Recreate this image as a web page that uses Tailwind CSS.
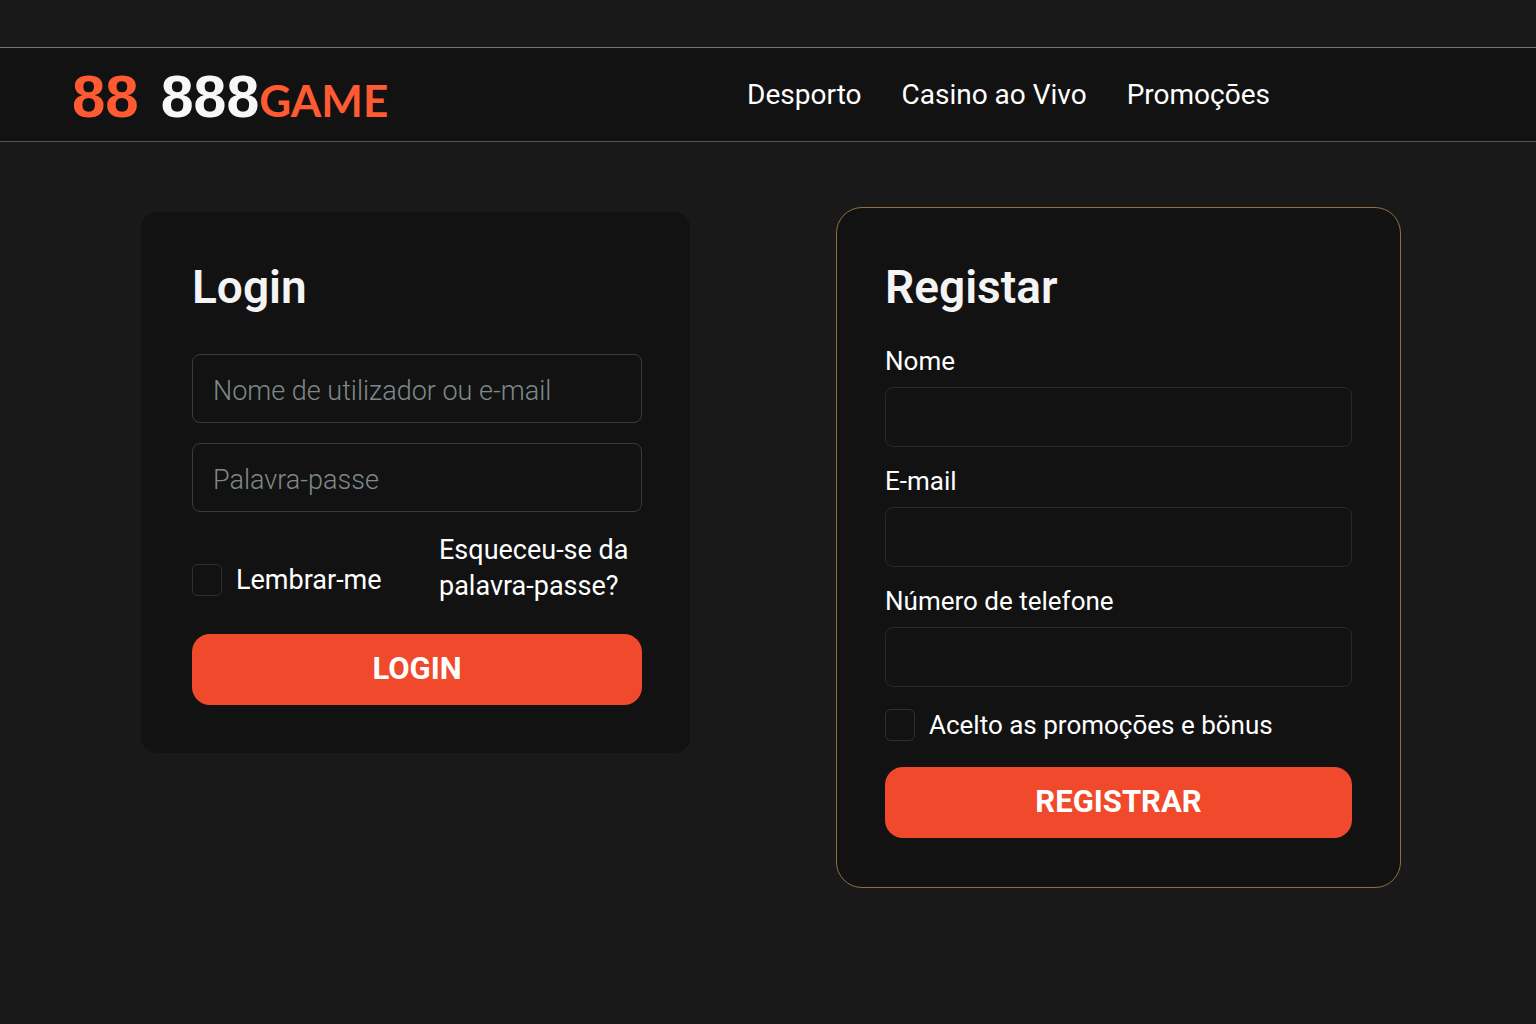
<!DOCTYPE html>
<html lang="pt">
<head>
<meta charset="utf-8">
<meta name="viewport" content="width=device-width, initial-scale=1">
<title>888GAME</title>
<script src="https://cdn.jsdelivr.net/npm/@tailwindcss/browser@4"></script>
</head>
<body class="min-h-screen bg-[#191919] pt-[47px] font-[Roboto,sans-serif] text-white">
<header class="flex items-center justify-between border-y border-t-[#777] border-b-[#555] bg-[#121212] pr-[266px] pl-[72px]">
  <a href="#" class="flex items-baseline gap-[22px] pt-[19px] pb-[14px] font-['Liberation_Sans',sans-serif] font-bold leading-none">
    <span class="text-[60px] leading-none text-[#ff5a32]">88</span>
    <span class="flex items-baseline"><span class="text-[59px] leading-none text-[#f7f7f7]">888</span><span class="font-[Lato,sans-serif] text-[44px] leading-none text-[#ff5a32]">GAME</span></span>
  </a>
  <nav class="flex gap-10 text-[28px] leading-9">
    <a href="#">Desporto</a>
    <a href="#">Casino ao Vivo</a>
    <a href="#">Promoçōes</a>
  </nav>
</header>
<main class="grid grid-cols-[549fr_565fr] items-start gap-[146px] pt-[65px] pr-[135px] pb-16 pl-[141px]">
  <form class="mt-[5px] rounded-2xl bg-[#121212] pt-12 pr-12 pb-12 pl-[51px]">
    <h1 class="text-[46px] leading-[54px] font-semibold text-[#f4f4f4]">Login</h1>
    <input type="text" aria-label="Nome de utilizador ou e-mail" placeholder="Nome de utilizador ou e-mail" class="mt-10 block h-[69px] w-full rounded-lg border border-[#3b3b3b] bg-transparent px-5 pt-1 text-[27px] placeholder:font-light placeholder:text-[#80888a]">
    <input type="password" aria-label="Palavra-passe" placeholder="Palavra-passe" class="mt-5 block h-[69px] w-full rounded-lg border border-[#3b3b3b] bg-transparent px-5 pt-1 text-[27px] placeholder:font-light placeholder:text-[#80888a]">
    <div class="mt-5 flex items-end justify-between">
      <label class="flex items-center gap-[14px] pb-2 text-[27px] leading-8"><input type="checkbox" class="h-8 w-[30px] appearance-none rounded-md border border-[#303030] checked:bg-[#f1492b]">Lembrar-me</label>
      <a href="#" class="w-[203px] text-[27px] leading-9">Esqueceu-se da palavra-passe?</a>
    </div>
    <button type="submit" class="mt-[30px] block h-[71px] w-full rounded-[18px] bg-[#f1492b] text-[31px] font-bold">LOGIN</button>
  </form>
  <form class="rounded-[26px] border border-[#8c7140] bg-[#121212] px-12 pt-[52px] pb-[49px]">
    <h1 class="text-[46px] leading-[54px] font-semibold text-[#f4f4f4]">Registar</h1>
    <label for="nome" class="mt-[31px] block text-[26px] leading-8">Nome</label>
    <input id="nome" type="text" class="mt-[10px] block h-[60px] w-full rounded-lg border border-[#292929] bg-transparent px-5 text-[26px]">
    <label for="email" class="mt-[18px] block text-[26px] leading-8">E-mail</label>
    <input id="email" type="email" class="mt-[10px] block h-[60px] w-full rounded-lg border border-[#292929] bg-transparent px-5 text-[26px]">
    <label for="telefone" class="mt-[18px] block text-[26px] leading-8">Número de telefone</label>
    <input id="telefone" type="tel" class="mt-[10px] block h-[60px] w-full rounded-lg border border-[#292929] bg-transparent px-5 text-[26px]">
    <label class="mt-[22px] flex items-center gap-[14px] text-[26px] leading-8"><input type="checkbox" class="h-8 w-[30px] appearance-none rounded-md border border-[#303030] checked:bg-[#f1492b]">Acelto as promoçōes e bönus</label>
    <button type="submit" class="mt-[26px] block h-[71px] w-full rounded-[18px] bg-[#f1492b] text-[31px] font-bold">REGISTRAR</button>
  </form>
</main>
</body>
</html>
